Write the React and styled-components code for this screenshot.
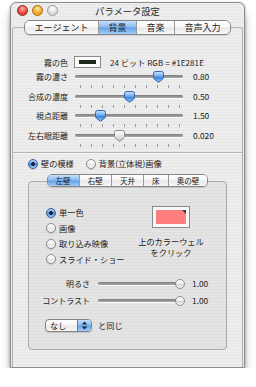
import styled, { createGlobalStyle, css } from "styled-components";

const GlobalStyle = createGlobalStyle`
  html, body {
    margin: 0;
    background: #ffffff;
  }
  body {
    font-family: "Noto Sans CJK JP", "Liberation Sans", sans-serif;
    color: #1a1a1a;
  }
`;

const pinstripes = css`
  background-color: #ebebeb;
  background-image: repeating-linear-gradient(
    to bottom,
    #eeeeee 0 1px,
    #e7e7e7 1px 2px,
    #ececec 2px 3px
  );
`;

const aquaBlue = css`
  background: linear-gradient(#c6e0fa, #89baef 48%, #629fe8 52%, #a2cdf7);
`;

const aquaWhite = css`
  background: linear-gradient(#ffffff, #f6f6f6 48%, #e8e8e8 52%, #f7f7f7);
`;

const fogSliders = [
  { label: "霧の濃さ", pos: 0.79, value: "0.80" },
  { label: "合成の濃度", pos: 0.5, value: "0.50" },
  { label: "視点距離", pos: 0.21, value: "1.50" },
  { label: "左右眼距離", pos: 0.4, value: "0.020", dim: true },
];

const wallKinds = ["単一色", "画像", "取り込み映像", "スライド・ショー"];

function Light({ color }) {
  return <Dot $color={color} />;
}

function Thumb({ pos, dim }) {
  const id = dim ? "thumbGray" : "thumbBlue";
  return (
    <ThumbWrap style={{ left: `${5 + pos * 99 - 5.5}px` }}>
      <svg width="11" height="12" viewBox="0 0 11 12">
        <defs>
          <linearGradient id={id} x1="0" y1="0" x2="0" y2="1">
            {dim ? (
              <>
                <stop offset="0" stopColor="#ffffff" />
                <stop offset="0.5" stopColor="#e6e6e6" />
                <stop offset="1" stopColor="#c4c4c4" />
              </>
            ) : (
              <>
                <stop offset="0" stopColor="#cfe6ff" />
                <stop offset="0.45" stopColor="#6aa9f0" />
                <stop offset="0.55" stopColor="#3d86e0" />
                <stop offset="1" stopColor="#8cc4ff" />
              </>
            )}
          </linearGradient>
        </defs>
        <path
          d="M2.5 0.5 H8.5 Q10.5 0.5 10.5 2.5 V6.5 Q10.5 7.5 9.5 8.3 L5.5 11.3 L1.5 8.3 Q0.5 7.5 0.5 6.5 V2.5 Q0.5 0.5 2.5 0.5 Z"
          fill={`url(#${id})`}
          stroke={dim ? "#8c8c8c" : "#3862a8"}
          strokeWidth="1"
        />
      </svg>
    </ThumbWrap>
  );
}

function TickSlider({ pos, dim }) {
  return (
    <SliderBox>
      <Track />
      <Ticks>
        {Array.from({ length: 10 }, (_, i) => (
          <Tick key={i} />
        ))}
      </Ticks>
      <Thumb pos={pos} dim={dim} />
    </SliderBox>
  );
}

function Radio({ checked, children }) {
  return (
    <RadioItem>
      <RadioCircle $checked={checked} />
      <span>{children}</span>
    </RadioItem>
  );
}

export default function App() {
  return (
    <>
      <GlobalStyle />
      <Window>
        <TitleBar>
          <Lights>
            <Light color="red" />
            <Light color="yellow" />
            <Light color="gray" />
          </Lights>
          <Title>パラメータ設定</Title>
          <span />
        </TitleBar>

        <TabView>
          <Segments $small={false}>
            <Segment>エージェント</Segment>
            <Segment $active>背景</Segment>
            <Segment>音楽</Segment>
            <Segment>音声入力</Segment>
          </Segments>
          <OuterBox>
            <ColorRow>
              <Label $w={55}>霧の色</Label>
              <FogWell>
                <span />
              </FogWell>
              <RgbText>24 ビット RGB = #1E281E</RgbText>
            </ColorRow>

            {fogSliders.map((s) => (
              <SliderRow key={s.label}>
                <Label $w={55}>{s.label}</Label>
                <TickSlider pos={s.pos} dim={s.dim} />
                <Value>{s.value}</Value>
              </SliderRow>
            ))}

            <Separator />

            <ModeRow>
              <Radio checked>壁の模様</Radio>
              <Radio>背景(立体視)画像</Radio>
            </ModeRow>

            <InnerTabView>
              <Segments $small>
                <Segment $small $active>
                  左壁
                </Segment>
                <Segment $small>右壁</Segment>
                <Segment $small>天井</Segment>
                <Segment $small>床</Segment>
                <Segment $small>奥の壁</Segment>
              </Segments>
              <InnerBox>
                <WallTop>
                  <RadioList>
                    {wallKinds.map((k, i) => (
                      <Radio key={k} checked={i === 0}>
                        {k}
                      </Radio>
                    ))}
                  </RadioList>
                  <WellColumn>
                    <PinkWell>
                      <span />
                    </PinkWell>
                    <Caption>
                      上のカラーウェル
                      <br />
                      をクリック
                    </Caption>
                  </WellColumn>
                </WallTop>

                <PlainRow $top={13}>
                  <Label $w={61}>明るさ</Label>
                  <PlainSlider>
                    <Track />
                    <RoundKnob />
                  </PlainSlider>
                  <Value $gap={7}>1.00</Value>
                </PlainRow>
                <PlainRow $top={5}>
                  <Label $w={61}>コントラスト</Label>
                  <PlainSlider>
                    <Track />
                    <RoundKnob />
                  </PlainSlider>
                  <Value $gap={7}>1.00</Value>
                </PlainRow>

                <PopupRow>
                  <Popup>
                    <PopupText>なし</PopupText>
                    <PopupArrows>
                      <svg width="7" height="9" viewBox="0 0 7 9">
                        <path d="M3.5 0.5 L6.3 3.5 H0.7 Z" fill="#1b2a40" />
                        <path d="M3.5 8.5 L6.3 5.5 H0.7 Z" fill="#1b2a40" />
                      </svg>
                    </PopupArrows>
                  </Popup>
                  <span>と同じ</span>
                </PopupRow>
              </InnerBox>
            </InnerTabView>
          </OuterBox>
        </TabView>
      </Window>
    </>
  );
}

const Window = styled.div`
  box-sizing: border-box;
  margin: 2px 0 0 10px;
  width: 235px;
  height: 366px;
  border: 1px solid #8e8e8e;
  border-radius: 6px 6px 1px 1px;
  ${pinstripes}
  box-shadow: 0 9px 11px -3px rgba(0, 0, 0, 0.55),
    0 1px 3px rgba(0, 0, 0, 0.3);
  display: flex;
  flex-direction: column;
`;

const TitleBar = styled.div`
  height: 15px;
  display: grid;
  grid-template-columns: 1fr auto 1fr;
  align-items: center;
  padding: 0 6px;
`;

const Lights = styled.div`
  display: flex;
  gap: 4px;
`;

const dotColors = {
  red: ["#ffb0a8", "#e2463c", "#9c1a12"],
  yellow: ["#ffe6a0", "#f2a623", "#a8650a"],
  gray: ["#ffffff", "#dcdcdc", "#9a9a9a"],
};

const Dot = styled.span`
  width: 11px;
  height: 11px;
  border-radius: 50%;
  box-sizing: border-box;
  border: 1px solid ${(p) => dotColors[p.$color][2]};
  background: radial-gradient(
    circle at 50% 30%,
    ${(p) => dotColors[p.$color][0]} 0,
    ${(p) => dotColors[p.$color][1]} 60%,
    ${(p) => dotColors[p.$color][1]} 100%
  );
`;

const Title = styled.div`
  font-size: 9.3px;
  line-height: 12px;
  color: #2a2a2a;
`;

const TabView = styled.div`
  flex: 1;
  display: flex;
  flex-direction: column;
  padding-top: 2px;
`;

const Segments = styled.div`
  position: relative;
  z-index: 1;
  align-self: center;
  display: flex;
  height: ${(p) => (p.$small ? 13 : 15)}px;
  box-sizing: border-box;
  border: 1px solid #858585;
  border-radius: ${(p) => (p.$small ? 5 : 6)}px;
  overflow: hidden;
  box-shadow: 0 1px 1px rgba(0, 0, 0, 0.12);
`;

const Segment = styled.div`
  display: flex;
  align-items: center;
  padding: 0 ${(p) => (p.$small ? 8 : 9.5)}px;
  font-size: ${(p) => (p.$small ? 7.6 : 9)}px;
  color: #222;
  ${(p) => (p.$active ? aquaBlue : aquaWhite)}
  & + & {
    border-left: 1px solid #9a9a9a;
  }
`;

const OuterBox = styled.div`
  flex: 1;
  margin: -8px 1px 0;
  padding-top: 28px;
  border: 1px solid #b2b2b2;
  border-bottom: none;
  border-radius: 3px 3px 0 0;
  display: flex;
  flex-direction: column;
`;

const Label = styled.div`
  flex: none;
  width: ${(p) => p.$w}px;
  text-align: right;
  font-size: 8px;
  line-height: 11px;
  color: #222;
`;

const ColorRow = styled.div`
  display: flex;
  align-items: center;
  height: 12px;
  margin-bottom: 3px;
`;

const FogWell = styled.div`
  margin-left: 6px;
  width: 27px;
  height: 12px;
  box-sizing: border-box;
  border: 1px solid #8a8a8a;
  background: #fbfbfb;
  padding: 3px 4px;
  & span {
    display: block;
    height: 100%;
    background: #1e281e;
  }
`;

const RgbText = styled.div`
  margin-left: 9px;
  font-size: 8px;
  line-height: 11px;
  letter-spacing: 0.1px;
`;

const SliderRow = styled.div`
  display: flex;
  align-items: flex-start;
  height: 19.5px;
`;

const SliderBox = styled.div`
  position: relative;
  margin-left: 7px;
  width: 108px;
  height: 19px;
  flex: none;
`;

const Track = styled.div`
  margin-top: 4px;
  height: 3px;
  border-radius: 2px;
  background: linear-gradient(#7d7d7d, #a9a9a9);
  box-shadow: 0 1px 0 #fafafa;
`;

const Ticks = styled.div`
  display: flex;
  justify-content: space-between;
  margin-top: 7px;
  padding: 0 3px 0 5px;
`;

const Tick = styled.span`
  width: 1px;
  height: 3px;
  background: #999999;
`;

const ThumbWrap = styled.div`
  position: absolute;
  top: 0;
  line-height: 0;
`;

const Value = styled.div`
  margin-left: ${(p) => p.$gap ?? 10}px;
  font-size: 8.4px;
  line-height: 11px;
`;

const Separator = styled.div`
  margin-top: 3px;
  height: 1px;
  background: #b4b4b4;
  box-shadow: 0 1px 0 #fafafa;
`;

const ModeRow = styled.div`
  display: flex;
  gap: 12px;
  margin-top: 5px;
  padding-left: 15px;
`;

const RadioItem = styled.label`
  display: flex;
  align-items: center;
  gap: 3px;
  height: 11px;
  font-size: 8.2px;
  line-height: 11px;
  color: #1c1c1c;
`;

const RadioCircle = styled.span`
  flex: none;
  width: 10px;
  height: 10px;
  box-sizing: border-box;
  border-radius: 50%;
  border: 1px solid ${(p) => (p.$checked ? "#3b5f9c" : "#8c8c8c")};
  background: ${(p) =>
    p.$checked
      ? "radial-gradient(circle, #1a2438 0 1.6px, transparent 2.2px), linear-gradient(#b7d6f7, #5c9ce6 50%, #3f86e0 55%, #a8d2fb)"
      : "linear-gradient(#ffffff, #f2f2f2 50%, #e3e3e3 55%, #fafafa)"};
  box-shadow: 0 1px 1px rgba(0, 0, 0, 0.15);
`;

const InnerTabView = styled.div`
  display: flex;
  flex-direction: column;
  margin-top: 5px;
  padding: 0 15px;
`;

const InnerBox = styled.div`
  height: 169px;
  box-sizing: border-box;
  margin-top: -6px;
  padding-top: 24px;
  border: 1px solid #a9a9a9;
  border-radius: 4px;
  background: rgba(0, 0, 0, 0.035);
`;

const WallTop = styled.div`
  display: flex;
`;

const RadioList = styled.div`
  width: 99px;
  padding: 1px 0 0 17px;
  box-sizing: border-box;
  display: flex;
  flex-direction: column;
  gap: 4.5px;
`;

const WellColumn = styled.div`
  width: 86px;
  display: flex;
  flex-direction: column;
  align-items: center;
`;

const PinkWell = styled.div`
  position: relative;
  width: 38px;
  height: 22px;
  box-sizing: border-box;
  border: 1px solid #8a8a8a;
  background: #f8f8f8;
  padding: 3px;
  & span {
    display: block;
    height: 100%;
    background: #ff7f7f;
  }
  &::after {
    content: "";
    position: absolute;
    top: 3px;
    right: 3px;
    border-top: 4px solid #3a3a3a;
    border-left: 4px solid transparent;
  }
`;

const Caption = styled.div`
  margin-top: 8px;
  font-size: 8.2px;
  line-height: 11px;
  text-align: center;
  color: #222;
`;

const PlainRow = styled.div`
  display: flex;
  align-items: center;
  height: 12px;
  margin-top: ${(p) => p.$top}px;
`;

const PlainSlider = styled.div`
  position: relative;
  margin-left: 8px;
  width: 87px;
  height: 12px;
  display: flex;
  align-items: center;
  & ${Track} {
    flex: 1;
    margin: 0 3px 0 0;
  }
`;

const RoundKnob = styled.span`
  position: absolute;
  right: 0;
  top: 1px;
  width: 10px;
  height: 10px;
  box-sizing: border-box;
  border-radius: 50%;
  border: 1px solid #8e8e8e;
  background: linear-gradient(#ffffff, #ececec 50%, #d6d6d6 55%, #f4f4f4);
`;

const PopupRow = styled.div`
  display: flex;
  align-items: center;
  gap: 6px;
  margin-top: 12px;
  padding-left: 16px;
  font-size: 8.2px;
  line-height: 11px;
`;

const Popup = styled.div`
  display: flex;
  width: 47px;
  height: 13px;
  box-sizing: border-box;
  border: 1px solid #838383;
  border-radius: 4px;
  overflow: hidden;
  ${aquaWhite}
  box-shadow: 0 1px 1px rgba(0, 0, 0, 0.15);
`;

const PopupText = styled.span`
  flex: 1;
  padding-left: 4px;
  font-size: 8.2px;
  line-height: 11px;
`;

const PopupArrows = styled.span`
  width: 13px;
  display: flex;
  align-items: center;
  justify-content: center;
  border-left: 1px solid #5a7fb8;
  ${aquaBlue}
`;
